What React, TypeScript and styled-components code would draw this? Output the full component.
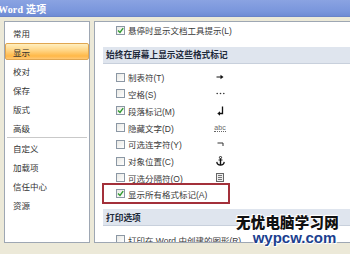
import React from "react";
import styled, { createGlobalStyle } from "styled-components";

const GlobalStyle = createGlobalStyle`
  html, body { margin: 0; padding: 0; background: #ece9d8; overflow: hidden; }
  * { box-sizing: border-box; }
`;

const FONT = `"Liberation Sans", "Noto Sans CJK SC", sans-serif`;

const Window = styled.div`
  position: relative;
  width: 350px;
  height: 254px;
  display: flex;
  flex-direction: column;
  background: #ece9d8;
  font-family: ${FONT};
  overflow: hidden;
`;

const TitleBar = styled.div`
  height: 17px;
  flex: none;
  display: flex;
  align-items: center;
  background: linear-gradient(#8aa3e2, #7a96dc 70%, #6f8bd4);
  border-bottom: 1px solid #6a84c8;
  color: #fff;
  font-family: "Liberation Serif", "Noto Sans CJK SC", serif;
  font-weight: bold;
  font-size: 10px;
  letter-spacing: 0.2px;
  margin-left: -2px;
`;

const Body = styled.div`
  flex: none;
  height: 226px;
  display: flex;
  gap: 4px;
  padding: 4px 0 0 4px;
`;

const Nav = styled.div`
  width: 86px;
  flex: none;
  background: #fff;
  border: 1px solid #9ea7b3;
  padding-top: 1px;
  display: flex;
  flex-direction: column;
`;

const NavItem = styled.div<{ $active?: boolean }>`
  height: 19px;
  flex: none;
  display: flex;
  align-items: center;
  padding-left: 8px;
  font-size: 8.5px;
  color: #333;
  ${(p) =>
    p.$active &&
    `
    margin: 1px 0;
    height: 17px;
    background: linear-gradient(#ffefc0, #ffd482 45%, #ffb847 80%, #ffc874);
    border: 1px solid #e0a650;
    border-radius: 2px;
    padding-left: 7px;
  `}
`;

const NavSep = styled.div`
  height: 1px;
  flex: none;
  margin: 0 2px;
  background: #c9c9c9;
`;

const Content = styled.div`
  flex: 1;
  background: #fff;
  border-top: 1px solid #9ea7b3;
  border-left: 1px solid #9ea7b3;
  border-bottom: 1px solid #9ea7b3;
  display: flex;
  flex-direction: column;
  overflow: hidden;
`;

const Row = styled.div`
  height: 16.8px;
  flex: none;
  display: flex;
  align-items: center;
  padding-left: 21px;
  font-size: 8.5px;
  color: #3a3a3a;
  white-space: nowrap;
`;

const Box = styled.span`
  width: 9px;
  height: 9px;
  flex: none;
  border: 1px solid #8b97a4;
  background: linear-gradient(135deg, #e8e8e4, #fff);
  display: flex;
  align-items: center;
  justify-content: center;
  margin-right: 3px;
`;

const Label = styled.span`
  width: 85px;
  flex: none;
`;

const Mark = styled.span`
  width: 14px;
  display: flex;
  align-items: center;
  justify-content: center;
  font-size: 9px;
  color: #222;
`;

const Band = styled.div<{ $gap: number }>`
  height: 17px;
  flex: none;
  margin: ${(p) => p.$gap}px 0 0 8px;
  display: flex;
  align-items: center;
  padding-left: 3px;
  background: #dfe5ee;
  border-bottom: 1px solid #c8d0dc;
  font-size: 8.7px;
  font-weight: bold;
  color: #1e2a3a;
  white-space: nowrap;
`;

const Group = styled.div`
  display: flex;
  flex-direction: column;
  padding-top: 5px;
`;

const Highlight = styled.div`
  margin: -3px 0 0 7px;
  width: 128px;
  height: 21px;
  flex: none;
  border: 2px solid #a3303a;
  display: flex;
  align-items: center;
  padding-left: 12px;
  font-size: 8.5px;
  color: #3a3a3a;
  white-space: nowrap;
`;

const PartialRow = styled(Row)`
  margin-top: 5px;
`;

const Watermark = styled.div`
  position: absolute;
  left: 236px;
  top: 215px;
  display: flex;
  flex-direction: column;
  align-items: center;
  line-height: 1;
  font-family: "Noto Sans CJK SC", sans-serif;
  font-weight: 900;
  text-shadow: 0 0 2px #fff, 0 0 2px #fff, 0 0 3px #fff, 1px 1px 0 #fff, -1px -1px 0 #fff;
`;

const WmTop = styled.div`
  font-size: 14.5px;
  color: #111;
  letter-spacing: 0.2px;
`;

const WmBottom = styled.div`
  font-family: "Liberation Sans", sans-serif;
  font-weight: bold;
  font-size: 15px;
  color: #1c3f8f;
  margin-left: 14px;
`;

const Check = () => (
  <svg width="7" height="7" viewBox="0 0 7 7">
    <path d="M1 3.5 L3 5.5 L6.2 1.2" stroke="#2f9a2f" strokeWidth="1.4" fill="none" />
  </svg>
);

const ArrowGlyph = () => (
  <svg width="8" height="6" viewBox="0 0 8 6">
    <path d="M0.5 3 H6" stroke="#111" strokeWidth="1" />
    <path d="M4.5 0.8 L7.5 3 L4.5 5.2 Z" fill="#111" />
  </svg>
);

const Dots = () => (
  <svg width="9" height="3" viewBox="0 0 9 3">
    <circle cx="1.2" cy="1.5" r="0.8" fill="#333" />
    <circle cx="4.5" cy="1.5" r="0.8" fill="#333" />
    <circle cx="7.8" cy="1.5" r="0.8" fill="#333" />
  </svg>
);

const ReturnGlyph = () => (
  <svg width="7" height="10" viewBox="0 0 7 10">
    <path d="M5.5 0.5 V7.5 H2" stroke="#111" strokeWidth="1.3" fill="none" />
    <path d="M0.3 7.5 L3 5.3 L3 9.7 Z" fill="#111" />
  </svg>
);

const Hidden = styled.span`
  font-size: 7px;
  color: #666;
  border-bottom: 1px dotted #666;
  line-height: 7px;
  font-family: "Liberation Sans", sans-serif;
`;

const Hyphen = () => (
  <svg width="7" height="5" viewBox="0 0 7 5">
    <path d="M0.5 1 H6 V4" stroke="#333" strokeWidth="1" fill="none" />
  </svg>
);

const Anchor = () => (
  <svg width="9" height="10" viewBox="0 0 9 10">
    <circle cx="4.5" cy="1.5" r="1.1" stroke="#111" strokeWidth="0.9" fill="none" />
    <path d="M4.5 2.6 V9" stroke="#111" strokeWidth="1.4" />
    <path d="M2.5 4 H6.5" stroke="#111" strokeWidth="0.9" />
    <path d="M0.8 5.8 Q1.2 9 4.5 9 Q7.8 9 8.2 5.8" stroke="#111" strokeWidth="1.3" fill="none" />
  </svg>
);

const BreakGlyph = () => (
  <svg width="8" height="9" viewBox="0 0 8 9">
    <rect x="0.5" y="0.5" width="7" height="8" fill="#eee" stroke="#666" />
    <path d="M2 2.5 H6 M2 4.5 H6 M2 6.5 H6" stroke="#555" strokeWidth="0.8" />
  </svg>
);

type RowDef = { label: string; checked?: boolean; mark?: React.ReactNode };

const rows: RowDef[] = [
  { label: "制表符(T)", mark: <ArrowGlyph /> },
  { label: "空格(S)", mark: <Dots /> },
  { label: "段落标记(M)", checked: true, mark: <ReturnGlyph /> },
  { label: "隐藏文字(D)", mark: <Hidden>abc</Hidden> },
  { label: "可选连字符(Y)", mark: <Hyphen /> },
  { label: "对象位置(C)", mark: <Anchor /> },
  { label: "可选分隔符(O)", mark: <BreakGlyph /> },
];

const navTop = ["常用", "显示", "校对", "保存", "版式", "高级"];
const navBottom = ["自定义", "加载项", "信任中心", "资源"];

export default function App() {
  return (
    <>
      <GlobalStyle />
      <Window>
        <TitleBar>Word 选项</TitleBar>
        <Body>
          <Nav>
            {navTop.map((n) => (
              <NavItem key={n} $active={n === "显示"}>
                {n}
              </NavItem>
            ))}
            <NavSep />
            {navBottom.map((n) => (
              <NavItem key={n}>{n}</NavItem>
            ))}
          </Nav>
          <Content>
            <Row>
              <Box>
                <Check />
              </Box>
              <span>悬停时显示文档工具提示(L)</span>
            </Row>
            <Band $gap={8}>始终在屏幕上显示这些格式标记</Band>
            <Group>
              {rows.map((r) => (
                <Row key={r.label}>
                  <Box>{r.checked && <Check />}</Box>
                  <Label>{r.label}</Label>
                  <Mark>{r.mark}</Mark>
                </Row>
              ))}
              <Highlight>
                <Box>
                  <Check />
                </Box>
                <Label>显示所有格式标记(A)</Label>
              </Highlight>
            </Group>
            <Band $gap={5}>打印选项</Band>
            <PartialRow>
              <Box />
              <span>打印在 Word 中创建的图形(R)</span>
            </PartialRow>
          </Content>
        </Body>
        <Watermark>
          <WmTop>无忧电脑学习网</WmTop>
          <WmBottom>wypcw.com</WmBottom>
        </Watermark>
      </Window>
    </>
  );
}
